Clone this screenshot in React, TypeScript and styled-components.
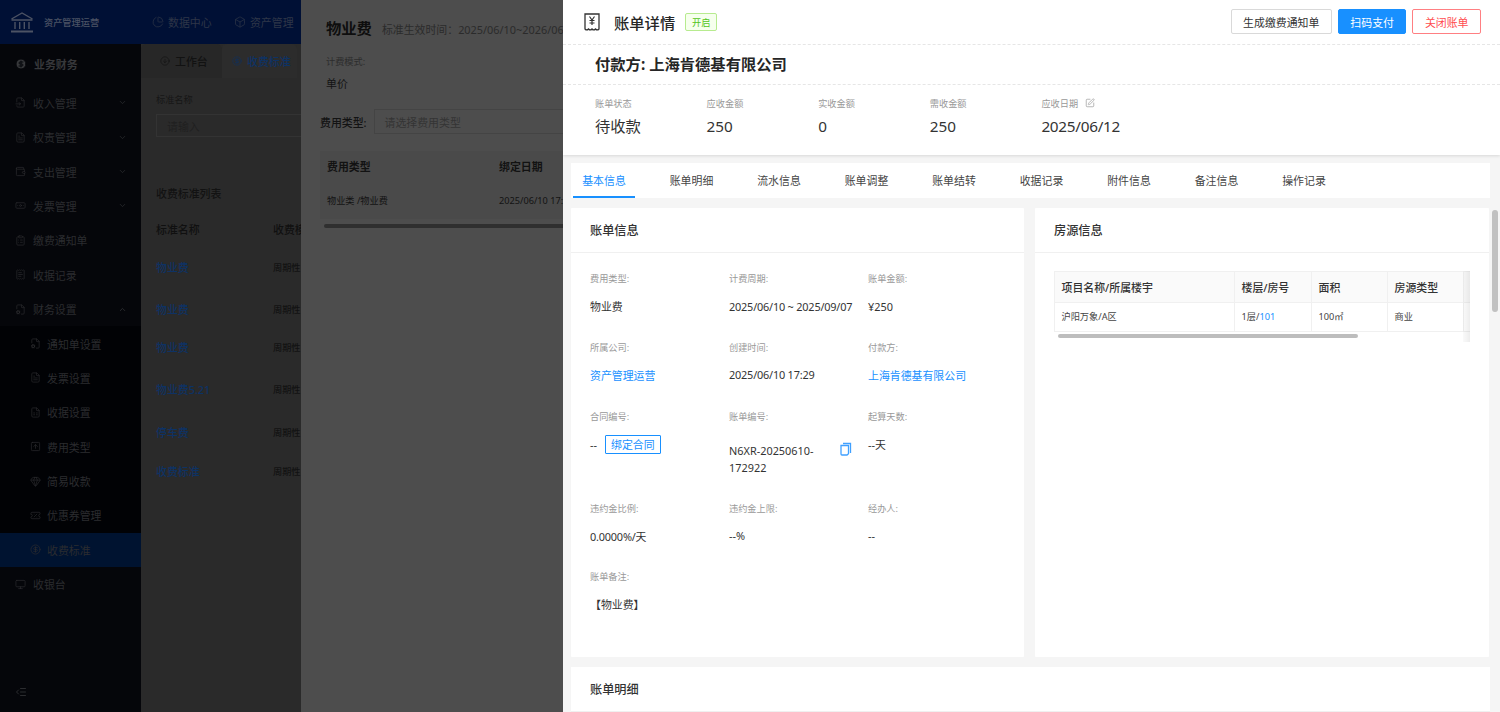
import React from "react";
import styled, { createGlobalStyle } from "styled-components";
import {
  Banknote,
  Box,
  ChevronDown,
  ChevronUp,
  CircleDollarSign,
  ClipboardList,
  FileCog,
  FileInput,
  FileText,
  Monitor,
  PieChart,
  ReceiptText,
  SquarePen,
  TicketPercent,
  Wallet,
  Gem,
  FileSpreadsheet,
  SquareArrowUp,
  Outdent,
  CircleArrowDown,
} from "lucide-react";

const GlobalStyle = createGlobalStyle`
  * { box-sizing: border-box; }
  html, body { margin: 0; height: 100%; overflow: hidden; }
  body {
    font-family: "Noto Sans", "Noto Sans CJK SC", sans-serif;
    font-size: 10.9px;
    color: #333;
    background: #2b2b2b;
  }
`;

const Screen = styled.div`
  position: relative;
  width: 1500px;
  height: 712px;
  overflow: hidden;
`;

/* the page behind the two drawers, painted at its dimmed colours */
const Page = styled.div`
  display: grid;
  grid-template-rows: 44px 1fr;
  height: 100%;
  background: #2a2a2a;
`;

const TopBar = styled.header`
  display: flex;
  align-items: center;
  background: #001035;
  color: #2e3648;
`;

const Brand = styled.div`
  display: flex;
  align-items: center;
  gap: 10px;
  width: 152px;
  padding-left: 10px;
  font-size: 9.2px;
  font-weight: 500;
  color: #4c5364;
`;

const TopNavItem = styled.div`
  display: flex;
  align-items: center;
  gap: 4px;
  margin-right: 22.4px;
`;

const Body = styled.div`
  display: grid;
  grid-template-columns: 141px 1fr;
  min-height: 0;
`;

const Sidebar = styled.aside`
  position: relative;
  background: #05060a;
  color: #2b2c2f;
`;

const MenuGroup = styled.div`
  display: flex;
  align-items: center;
  gap: 7px;
  height: 41.6px;
  padding: 0 0 2px 15px;
  font-weight: 700;
  color: #37383b;
`;

const MenuRow = styled.div<{ $sub?: boolean; $active?: boolean }>`
  display: flex;
  align-items: center;
  gap: ${(p) => (p.$sub ? "6px" : "7px")};
  height: 34.4px;
  padding-left: ${(p) => (p.$sub ? "30px" : "15px")};
  padding-right: 14px;
  background: ${(p) => (p.$active ? "#001330" : p.$sub ? "#010205" : "transparent")};
`;

const Chevron = styled.span`
  display: flex;
  margin-left: auto;
`;

const Collapse = styled.div`
  position: absolute;
  left: 15px;
  bottom: 14px;
  display: flex;
`;

const Main = styled.main`
  padding-left: 15px;
  color: #121212;
`;

const TabStrip = styled.div`
  display: flex;
  align-items: stretch;
  height: 40px;
  padding-bottom: 6px;
  margin-left: -15px;
`;

const PageTab = styled.div<{ $active?: boolean }>`
  display: flex;
  align-items: center;
  gap: 5px;
  width: ${(p) => (p.$active ? "auto" : "81px")};
  padding-left: ${(p) => (p.$active ? "10px" : "19px")};
  padding-right: ${(p) => (p.$active ? "6px" : "0")};
  border-radius: 5px 5px 0 0;
  background: ${(p) => (p.$active ? "#2c2c2c" : "#272727")};
  color: ${(p) => (p.$active ? "#0e3264" : "#121212")};
  font-weight: 500;
`;

const FilterLabel = styled.div`
  margin-top: 8px;
  font-size: 9.2px;
  color: #161616;
`;

const FilterInput = styled.div`
  display: flex;
  align-items: center;
  height: 23px;
  margin-top: 8px;
  padding-left: 10px;
  border: 1px solid #333;
  color: #202020;
`;

const ListTitle = styled.div`
  margin-top: 48px;
  height: 18px;
  font-weight: 500;
  color: #121212;
`;

const ListHead = styled.div`
  display: grid;
  grid-template-columns: 117px 1fr;
  margin: 18px 0 5px;
  height: 20px;
  font-weight: 500;
  color: #101010;
`;

const ListRow = styled.div<{ $h: number }>`
  display: grid;
  grid-template-columns: 117px 1fr;
  align-items: center;
  height: ${(p) => p.$h}px;
`;

const ListLink = styled.span`
  color: #0e3264;
  font-weight: 500;
`;

const ListCell = styled.span`
  color: #121212;
  font-size: 9.2px;
  font-weight: 500;
`;

const MidDrawer = styled.section`
  position: absolute;
  top: 0;
  left: 301px;
  bottom: 0;
  width: 700px;
  padding: 0 19px;
  background: #4d4d4d;
  color: #131313;
`;

const MidTitleRow = styled.div`
  display: flex;
  align-items: baseline;
  gap: 10px;
  padding: 16px 0 0 6px;
  height: 50px;
`;

const MidTitle = styled.span`
  font-size: 15.3px;
  font-weight: 700;
  color: #0e0e0e;
`;

const MidNote = styled.span`
  color: #2b2b2b;
  white-space: nowrap;
`;

const MidLabel = styled.div`
  padding-left: 6px;
  font-size: 9.2px;
  color: #2c2c2c;
  height: 22px;
  display: flex;
  align-items: center;
`;

const MidValue = styled.div`
  padding-left: 6px;
  height: 21px;
  display: flex;
  align-items: center;
`;

const MidField = styled.div`
  display: flex;
  align-items: center;
  margin-top: 16px;
  height: 25px;
  font-weight: 500;
`;

const MidInput = styled.div`
  display: flex;
  align-items: center;
  flex: 1;
  height: 25px;
  margin-left: 7px;
  padding-left: 10px;
  border: 1px solid #444;
  font-weight: 400;
  color: #343434;
`;

const MidTable = styled.div`
  margin-top: 17px;
  display: grid;
  grid-template-columns: 172px 1fr;
  grid-template-rows: 30px 38px;
  align-items: center;
  background: #4a4a4a;
`;

const MidHeadCell = styled.div`
  padding-left: 7px;
  font-weight: 700;
  color: #121212;
`;

const MidCell = styled.div`
  padding-left: 7px;
  font-size: 9.2px;
  white-space: nowrap;
`;

const MidScroll = styled.div`
  height: 4px;
  margin: 5px 0 0 4px;
  border-radius: 2px;
  background: #2f2f2f;
`;

const Drawer = styled.section`
  position: absolute;
  top: 0;
  left: 563px;
  right: 0;
  bottom: 0;
  display: flex;
  flex-direction: column;
  overflow: hidden;
  background: #f5f5f5;
`;

const DrawerTop = styled.div`
  flex: none;
  height: 155px;
  background: #fff;
  box-shadow: 0 1px 3px rgba(0, 0, 0, 0.12);
`;

const TitleRow = styled.div`
  display: flex;
  align-items: center;
  height: 45px;
  padding: 0 19px 1px 21px;
  border-bottom: 1px dashed #e6e6e6;
`;

const DrawerTitle = styled.h1`
  margin: 0 10px 0 14px;
  font-size: 15.3px;
  font-weight: 500;
  color: #262626;
`;

const Tag = styled.span`
  display: flex;
  align-items: center;
  justify-content: center;
  width: 32px;
  height: 18px;
  border: 1px solid #b7eb8f;
  border-radius: 2px;
  background: #f6ffed;
  color: #52c41a;
  font-size: 9.2px;
`;

const Actions = styled.div`
  display: flex;
  gap: 6px;
  margin-left: auto;
`;

const Btn = styled.button<{ $kind?: "primary" | "danger" }>`
  height: 25px;
  padding: 0 11.5px;
  border: 1px solid
    ${(p) => (p.$kind === "primary" ? "#1890ff" : p.$kind === "danger" ? "#ff7f82" : "#d9d9d9")};
  border-radius: 2px;
  background: ${(p) => (p.$kind === "primary" ? "#1890ff" : "#fff")};
  color: ${(p) => (p.$kind === "primary" ? "#fff" : p.$kind === "danger" ? "#ff4d4f" : "#333")};
  font: inherit;
`;

const PayerRow = styled.div`
  display: flex;
  align-items: center;
  height: 40px;
  padding: 0 0 3px 32px;
  border-bottom: 1px dashed #e6e6e6;
  font-size: 15.3px;
  font-weight: 700;
  color: #262626;
`;

const StatRow = styled.div`
  display: grid;
  grid-template-columns: repeat(4, 111.6px) 1fr;
  padding: 11px 0 0 32px;
`;

const StatLabel = styled.div`
  display: flex;
  align-items: center;
  gap: 7px;
  height: 14px;
  font-size: 9.2px;
  color: #999;
`;

const StatValue = styled.div`
  margin-top: 4px;
  height: 24px;
  line-height: 24px;
  font-size: 15.3px;
  color: #333;
`;

const Digits = styled.span`
  letter-spacing: -0.018em;
`;

const DrawerBody = styled.div`
  flex: 1;
  min-height: 0;
  padding: 8px 10px 0 8px;
`;

const Tabs = styled.nav`
  display: flex;
  height: 35px;
  padding-left: 2px;
  background: #fff;
`;

const TabItem = styled.div<{ $active?: boolean }>`
  display: flex;
  align-items: center;
  justify-content: center;
  width: 62px;
  margin-right: 25.5px;
  border-bottom: 2px solid ${(p) => (p.$active ? "#1890ff" : "transparent")};
  color: ${(p) => (p.$active ? "#1890ff" : "#444")};
`;

const Panels = styled.div`
  display: grid;
  grid-template-columns: 453px 454px;
  gap: 11px;
  height: 449px;
  margin-top: 10px;
`;

const Panel = styled.div`
  background: #fff;
  border-radius: 1px;
`;

const PanelHead = styled.div`
  display: flex;
  align-items: center;
  height: 45px;
  padding-left: 19px;
  border-bottom: 1px solid #f0f0f0;
  font-size: 12.2px;
  font-weight: 500;
  color: #333;
`;

const FieldGrid = styled.div`
  display: grid;
  grid-template-columns: repeat(3, 139px);
  padding: 16.4px 0 0 19px;
`;

const Field = styled.div<{ $tall?: boolean }>`
  height: ${(p) => (p.$tall ? "92px" : "68.6px")};
`;

const FieldLabel = styled.div`
  display: flex;
  align-items: center;
  height: 18px;
  font-size: 9.2px;
  color: #999;
`;

const FieldValue = styled.div<{ $link?: boolean }>`
  display: flex;
  align-items: center;
  gap: 8px;
  margin-top: 10px;
  min-height: 18px;
  white-space: nowrap;
  color: ${(p) => (p.$link ? "#1890ff" : "#333")};
`;

const BindButton = styled.span`
  display: flex;
  align-items: center;
  height: 19px;
  padding: 0 5px;
  border: 1px solid #1890ff;
  border-radius: 1px;
  color: #1890ff;
`;

const SerialRow = styled.div`
  display: flex;
  align-items: flex-start;
  justify-content: space-between;
  width: 123px;
  margin-top: 17px;
`;

const Serial = styled.div`
  width: 90px;
  line-height: 17px;
  color: #333;
`;

const TableWrap = styled.div`
  position: relative;
  margin: 18px 19px 0;
  height: 71px;
  overflow: hidden;
`;

const RoomTable = styled.div`
  display: grid;
  grid-template-columns: 180px 77px 76px 76px 60px;
  grid-template-rows: 31px 29px;
  border-left: 1px solid #f0f0f0;
  border-top: 1px solid #f0f0f0;
`;

const HeadCell = styled.div`
  display: flex;
  align-items: center;
  padding-left: 6.5px;
  background: #fafafa;
  border-right: 1px solid #f0f0f0;
  border-bottom: 1px solid #f0f0f0;
  font-weight: 500;
  color: #333;
`;

const RoomCell = styled.div`
  display: flex;
  align-items: center;
  padding: 0 0 2px 6.5px;
  border-right: 1px solid #f0f0f0;
  border-bottom: 1px solid #f0f0f0;
  font-size: 9.2px;
  color: #444;
`;

const RoomLink = styled.span`
  color: #1890ff;
`;

const FixedShade = styled.div`
  position: absolute;
  top: 0;
  right: 0;
  bottom: 0;
  width: 7px;
  background: linear-gradient(90deg, rgba(0, 0, 0, 0.02), rgba(0, 0, 0, 0.07));
`;

const TableThumb = styled.div`
  position: absolute;
  left: 4px;
  bottom: 4px;
  width: 300px;
  height: 4px;
  border-radius: 2px;
  background: #bdbdbd;
`;

const LowerCard = styled.div`
  margin-top: 10px;
  height: 60px;
  background: #fff;
`;

const ScrollThumb = styled.div`
  position: absolute;
  top: 210px;
  right: 2px;
  width: 6px;
  height: 102px;
  border-radius: 3px;
  background: #c1c1c1;
`;

const subIcon = { size: 11, strokeWidth: 1.5 };

const menuTop = [
  { label: "收入管理", icon: FileInput },
  { label: "权责管理", icon: FileText },
  { label: "支出管理", icon: Wallet },
  { label: "发票管理", icon: Banknote },
  { label: "缴费通知单", icon: ClipboardList },
  { label: "收据记录", icon: ReceiptText },
];

const menuSub = [
  { label: "通知单设置", icon: FileCog },
  { label: "发票设置", icon: FileText },
  { label: "收据设置", icon: FileSpreadsheet },
  { label: "费用类型", icon: SquareArrowUp },
  { label: "简易收款", icon: Gem },
  { label: "优惠券管理", icon: TicketPercent },
];

const listRows = [
  { name: "物业费", h: 42 },
  { name: "物业费", h: 42 },
  { name: "物业费", h: 34 },
  { name: "物业费5.21", h: 50 },
  { name: "停车费", h: 35 },
  { name: "收费标准", h: 44 },
];

const stats = [
  { label: "账单状态", value: "待收款" },
  { label: "应收金额", value: "250" },
  { label: "实收金额", value: "0" },
  { label: "需收金额", value: "250" },
];

const tabs = ["基本信息", "账单明细", "流水信息", "账单调整", "账单结转", "收据记录", "附件信息", "备注信息", "操作记录"];

const LogoIcon = () => (
  <svg width="24" height="23" viewBox="0 0 24 23" fill="none" stroke="#4c5364" strokeWidth="1.4">
    <path d="M1.5 8 12 2l10.5 6M1.5 9h21" />
    <path d="M5 11v7M9.7 11v7M14.3 11v7M19 11v7" />
    <path d="M1 20.5h22" strokeWidth="2" />
  </svg>
);

const ReceiptIcon = () => (
  <svg width="16" height="18" viewBox="0 0 16 18" fill="none" stroke="#333" strokeWidth="1.3">
    <path d="M1 16V1h14v15c-1.2 1.3-2.3 1.3-3.5 0-1.2 1.3-2.3 1.3-3.5 0-1.2 1.3-2.3 1.3-3.5 0-1.2 1.3-2.3 1.3-3.5 0z" />
    <path d="M5.5 3.5 8 7l2.5-3.5M8 7v5M5.5 7.5h5M5.5 10h5" strokeWidth="1.2" />
  </svg>
);

const CopyIcon = () => (
  <svg width="12" height="14" viewBox="0 0 12 14" fill="none" stroke="#40a0ff" strokeWidth="1.3">
    <path d="M3 1.5h7.5V11" />
    <path d="M1 3.5h7.5v8.2L7 13H2a1 1 0 0 1-1-1z" />
  </svg>
);

export default function App() {
  return (
    <Screen>
      <GlobalStyle />
      <Page>
        <TopBar>
          <Brand>
            <LogoIcon />
            资产管理运营
          </Brand>
          <TopNavItem>
            <PieChart size={12} strokeWidth={1.4} />
            数据中心
          </TopNavItem>
          <TopNavItem>
            <Box size={12} strokeWidth={1.4} />
            资产管理
          </TopNavItem>
        </TopBar>
        <Body>
          <Sidebar>
            <MenuGroup>
              <CircleDollarSign size={12} fill="#37383b" stroke="#05060a" />
              业务财务
            </MenuGroup>
            {menuTop.map(({ label, icon: Icon }, i) => (
              <MenuRow key={label}>
                <Icon {...subIcon} />
                {label}
                {i < 4 && (
                  <Chevron>
                    <ChevronDown size={9} />
                  </Chevron>
                )}
              </MenuRow>
            ))}
            <MenuRow>
              <FileCog {...subIcon} />
              财务设置
              <Chevron>
                <ChevronUp size={9} strokeWidth={2.5} />
              </Chevron>
            </MenuRow>
            {menuSub.map(({ label, icon: Icon }) => (
              <MenuRow key={label} $sub>
                <Icon {...subIcon} />
                {label}
              </MenuRow>
            ))}
            <MenuRow $sub $active>
              <CircleDollarSign {...subIcon} />
              收费标准
            </MenuRow>
            <MenuRow>
              <Monitor {...subIcon} />
              收银台
            </MenuRow>
            <Collapse>
              <Outdent size={12} />
            </Collapse>
          </Sidebar>
          <Main>
            <TabStrip>
              <PageTab>
                <CircleArrowDown size={10} strokeWidth={1.4} />
                工作台
              </PageTab>
              <PageTab $active>
                <CircleDollarSign size={10} strokeWidth={1.4} />
                收费标准
              </PageTab>
            </TabStrip>
            <FilterLabel>标准名称</FilterLabel>
            <FilterInput>请输入</FilterInput>
            <ListTitle>收费标准列表</ListTitle>
            <ListHead>
              <span>标准名称</span>
              <span>收费模式</span>
            </ListHead>
            {listRows.map((row, i) => (
              <ListRow key={i} $h={row.h}>
                <ListLink>{row.name}</ListLink>
                <ListCell>周期性</ListCell>
              </ListRow>
            ))}
          </Main>
        </Body>
      </Page>

      <MidDrawer>
        <MidTitleRow>
          <MidTitle>物业费</MidTitle>
          <MidNote>标准生效时间：2025/06/10~2026/06/09</MidNote>
        </MidTitleRow>
        <MidLabel>计费模式:</MidLabel>
        <MidValue>单价</MidValue>
        <MidField>
          费用类型:
          <MidInput>请选择费用类型</MidInput>
        </MidField>
        <MidTable>
          <MidHeadCell>费用类型</MidHeadCell>
          <MidHeadCell>绑定日期</MidHeadCell>
          <MidCell>物业类 /物业费</MidCell>
          <MidCell>2025/06/10 17:29</MidCell>
        </MidTable>
        <MidScroll />
      </MidDrawer>

      <Drawer>
        <DrawerTop>
          <TitleRow>
            <ReceiptIcon />
            <DrawerTitle>账单详情</DrawerTitle>
            <Tag>开启</Tag>
            <Actions>
              <Btn>生成缴费通知单</Btn>
              <Btn $kind="primary">扫码支付</Btn>
              <Btn $kind="danger">关闭账单</Btn>
            </Actions>
          </TitleRow>
          <PayerRow>付款方: 上海肯德基有限公司</PayerRow>
          <StatRow>
            {stats.map((s) => (
              <div key={s.label}>
                <StatLabel>{s.label}</StatLabel>
                <StatValue>{s.value}</StatValue>
              </div>
            ))}
            <div>
              <StatLabel>
                应收日期
                <SquarePen size={10} color="#aaa" />
              </StatLabel>
              <StatValue>
                <Digits>2025/06/12</Digits>
              </StatValue>
            </div>
          </StatRow>
        </DrawerTop>
        <DrawerBody>
          <Tabs>
            {tabs.map((t, i) => (
              <TabItem key={t} $active={i === 0}>
                {t}
              </TabItem>
            ))}
          </Tabs>
          <Panels>
            <Panel>
              <PanelHead>账单信息</PanelHead>
              <FieldGrid>
                <Field>
                  <FieldLabel>费用类型:</FieldLabel>
                  <FieldValue>物业费</FieldValue>
                </Field>
                <Field>
                  <FieldLabel>计费周期:</FieldLabel>
                  <FieldValue>
                    <Digits>2025/06/10 ~ 2025/09/07</Digits>
                  </FieldValue>
                </Field>
                <Field>
                  <FieldLabel>账单金额:</FieldLabel>
                  <FieldValue>¥250</FieldValue>
                </Field>
                <Field>
                  <FieldLabel>所属公司:</FieldLabel>
                  <FieldValue $link>资产管理运营</FieldValue>
                </Field>
                <Field>
                  <FieldLabel>创建时间:</FieldLabel>
                  <FieldValue>
                    <Digits>2025/06/10 17:29</Digits>
                  </FieldValue>
                </Field>
                <Field>
                  <FieldLabel>付款方:</FieldLabel>
                  <FieldValue $link>上海肯德基有限公司</FieldValue>
                </Field>
                <Field $tall>
                  <FieldLabel>合同编号:</FieldLabel>
                  <FieldValue>
                    --
                    <BindButton>绑定合同</BindButton>
                  </FieldValue>
                </Field>
                <Field $tall>
                  <FieldLabel>账单编号:</FieldLabel>
                  <SerialRow>
                    <Serial>N6XR-20250610-172922</Serial>
                    <CopyIcon />
                  </SerialRow>
                </Field>
                <Field $tall>
                  <FieldLabel>起算天数:</FieldLabel>
                  <FieldValue>--天</FieldValue>
                </Field>
                <Field>
                  <FieldLabel>违约金比例:</FieldLabel>
                  <FieldValue>
                    <Digits>0.0000%/天</Digits>
                  </FieldValue>
                </Field>
                <Field>
                  <FieldLabel>违约金上限:</FieldLabel>
                  <FieldValue>--%</FieldValue>
                </Field>
                <Field>
                  <FieldLabel>经办人:</FieldLabel>
                  <FieldValue>--</FieldValue>
                </Field>
                <Field>
                  <FieldLabel>账单备注:</FieldLabel>
                  <FieldValue>【物业费】</FieldValue>
                </Field>
              </FieldGrid>
            </Panel>
            <Panel>
              <PanelHead>房源信息</PanelHead>
              <TableWrap>
                <RoomTable>
                  <HeadCell>项目名称/所属楼宇</HeadCell>
                  <HeadCell>楼层/房号</HeadCell>
                  <HeadCell>面积</HeadCell>
                  <HeadCell>房源类型</HeadCell>
                  <HeadCell />
                  <RoomCell>沪阳万象/A区</RoomCell>
                  <RoomCell>
                    1层/<RoomLink>101</RoomLink>
                  </RoomCell>
                  <RoomCell>100㎡</RoomCell>
                  <RoomCell>商业</RoomCell>
                  <RoomCell />
                </RoomTable>
                <FixedShade />
                <TableThumb />
              </TableWrap>
            </Panel>
          </Panels>
          <LowerCard>
            <PanelHead>账单明细</PanelHead>
          </LowerCard>
        </DrawerBody>
        <ScrollThumb />
      </Drawer>
    </Screen>
  );
}
